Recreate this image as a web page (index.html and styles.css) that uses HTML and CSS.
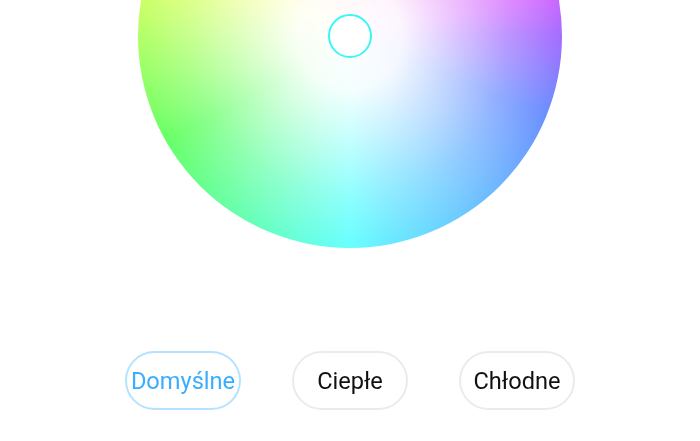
FILE: index.html
```html
<!DOCTYPE html>
<html lang="pl">
<head>
    <meta charset="UTF-8">
    <title>Kolor</title>
    <link rel="stylesheet" href="styles.css">
</head>
<body>
<div class="wheel">
    <div class="handle"></div>
</div>
<div class="modes">
    <div class="mode on">Domyślne</div>
    <div class="mode">Ciepłe</div>
    <div class="mode">Chłodne</div>
</div>
</body>
</html>
```
FILE: styles.css
```css
* { margin: 0; padding: 0; box-sizing: border-box; }
html, body { height: 100%; overflow: hidden; background: #fff; }
body { font-family: Roboto, "Liberation Sans", sans-serif; }

.wheel { width: 424px; height: 424px; margin: -176px auto 0; border-radius: 50%; position: relative;
    background:
        radial-gradient(circle closest-side, #fff 0%, rgba(255,255,255,.93) 25%, rgba(255,255,255,.6) 50%, rgba(255,255,255,.27) 75%, rgba(255,255,255,0) 100%),
        conic-gradient(#ff6680, #ff66e6 40deg, #cf66ff 79deg, #a46cff 90deg, #6a8fff 112deg, #6eb0ff 132deg, #6cc8ff 147deg, #68e8ff 168deg, #66ffff 180deg, #66ffe0 192deg, #66ffa6 215deg, #66ff66 240deg, #ffff66 300deg, #ff6680);
}
.handle { width: 44px; height: 44px; border: 2px solid #38f7f7; border-radius: 50%; background: #fff;
    position: absolute; left: 190px; top: 190px; }

.modes { display: flex; justify-content: center; gap: 51px; margin-top: 103px; }
.mode { width: 116px; height: 59px; padding-top: 1px; border: 2px solid #ebebeb; border-radius: 29.5px;
    display: flex; align-items: center; justify-content: center;
    font-size: 23.6px; color: #111; filter: blur(.35px); }
.mode.on { border-color: #b5e2ff; color: #3aadff; }
```
